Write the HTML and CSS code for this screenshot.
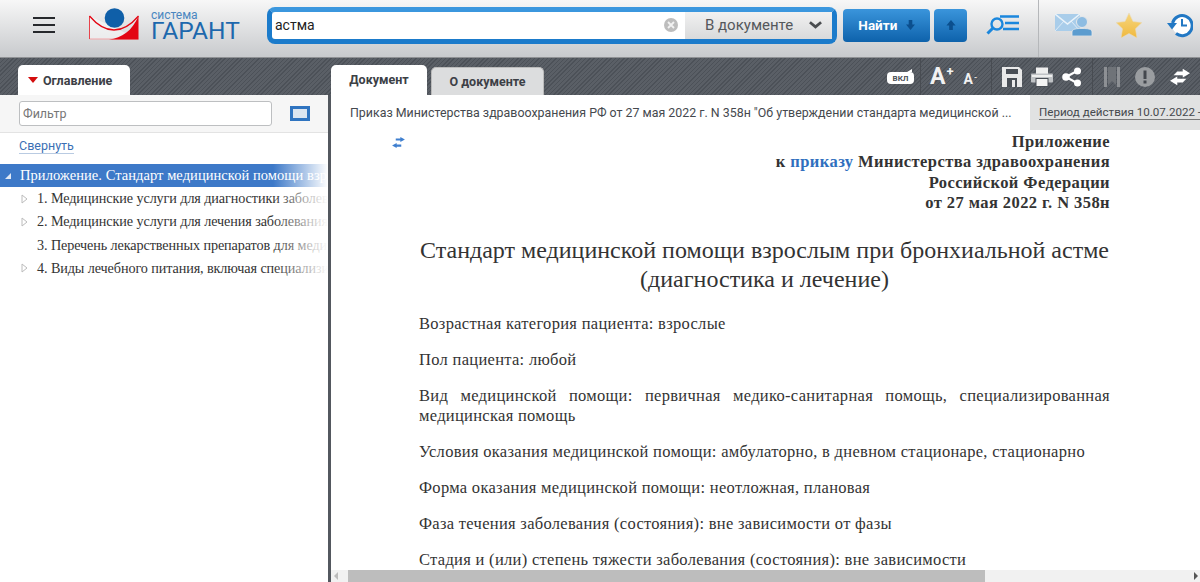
FILE: index.html
```html
<!DOCTYPE html>
<html lang="ru">
<head>
  <meta charset="UTF-8">
  <title>Система ГАРАНТ</title>
  <link rel="stylesheet" href="styles.css">
</head>
<body>

  <div class="topbar">
    <div class="burger"><span></span><span></span><span></span></div>

    <div class="logo">
      <svg class="logo-mark" viewBox="0 0 50 32" width="50" height="32">
        <path d="M0.5 8 V31 H49.5" fill="#fff" fill-opacity="0.5" stroke="#f3a5a8" stroke-width="1"/>
        <path d="M0.5 8 V31" stroke="#e8434b" stroke-width="1"/>
        <path d="M0.5 8 C9 18 17 22 25 22 C33 22 41 18 49.5 8" fill="none" stroke="#e30613" stroke-width="1.3"/>
        <path d="M49.5 8 V31.5 H20 C33 30 43 23 49.5 8 Z" fill="#e30613"/>
        <circle cx="25.5" cy="10" r="9.8" fill="#0f5fa8"/>
      </svg>
      <div class="logo-text">
        <div class="logo-small">система</div>
        <div class="logo-big">ГАРАНТ</div>
      </div>
    </div>

    <div class="search">
      <div class="search-input">астма</div>
      <svg class="search-clear" viewBox="0 0 14 14" width="14" height="14">
        <circle cx="7" cy="7" r="7" fill="#bdbdbd"/>
        <path d="M4 4 L10 10 M10 4 L4 10" stroke="#f2f2f2" stroke-width="1.8"/>
      </svg>
      <div class="search-scope">
        <span>В документе</span>
        <svg viewBox="0 0 14 8" width="13" height="8"><path d="M1 1 L7 6 L13 1" fill="none" stroke="#4a4d50" stroke-width="3"/></svg>
      </div>
    </div>

    <button class="btn-find">Найти
      <svg viewBox="0 0 10 11" width="9" height="10"><path d="M3 0 H7 V5 H10 L5 11 L0 5 H3 Z" fill="#0b4f8e"/></svg>
    </button>
    <button class="btn-up">
      <svg viewBox="0 0 10 12" width="10" height="11"><path d="M3 12 H7 V7 H10 L5 1 L0 7 H3 Z" fill="#0b4f8e"/></svg>
    </button>

    <svg class="icon-results" viewBox="0 0 34 20" width="34" height="20">
      <circle cx="11" cy="9" r="5.5" fill="none" stroke="#1b87dd" stroke-width="2.4"/>
      <path d="M7 13 L1.5 18.5" stroke="#1b87dd" stroke-width="3"/>
      <path d="M14 1.5 H33 M19 8 H33 M17 14 H33" stroke="#1b87dd" stroke-width="2.6"/>
    </svg>

    <div class="top-right">
      <svg class="ico-mail" viewBox="0 0 38 22" width="38" height="22">
        <rect x="0" y="0" width="25" height="17" fill="#a9cdea"/>
        <path d="M0 0 L12.5 10 L25 0" fill="none" stroke="#eaf3fa" stroke-width="1.5"/>
        <path d="M0 17 L9 7 M25 17 L16 7" stroke="#eaf3fa" stroke-width="0.8"/>
        <circle cx="27" cy="8" r="5.5" fill="#8dbce2" stroke="#e6e8ea"/>
        <path d="M17 22 V18 C17 15 21 14.5 27 14.5 C33 14.5 37 15 37 18 V22 Z" fill="#5c9ccf" stroke="#e6e8ea" stroke-width="0.8"/>
      </svg>
      <svg class="ico-star" viewBox="0 0 26 25" width="26" height="25">
        <defs>
          <linearGradient id="star" x1="0" y1="0" x2="0" y2="1">
            <stop offset="0" stop-color="#f6d67e"/>
            <stop offset="1" stop-color="#f0b93f"/>
          </linearGradient>
        </defs>
        <path d="M13 0 L17 8.5 L26 9.5 L19.5 15.7 L21 25 L13 20.5 L5 25 L6.5 15.7 L0 9.5 L9 8.5 Z" fill="url(#star)" stroke="#e9dcc0" stroke-width="0.6"/>
      </svg>
      <svg class="ico-history" viewBox="0 0 26 25" width="26" height="25">
        <circle cx="15" cy="12" r="10" fill="#fff"/>
        <path d="M5.5 10 A10 10 0 1 1 9 20.5" fill="none" stroke="#2278c4" stroke-width="3"/>
        <path d="M15 6 V12.5 H20" fill="none" stroke="#2278c4" stroke-width="2"/>
        <path d="M0 10 H10 L5 16.5 Z" fill="#2278c4"/>
      </svg>
    </div>
  </div>

  <div class="darkbar">
    <div class="darkbar-left">
      <div class="tab-toc"><i class="red-arrow"></i>Оглавление</div>
    </div>
    <div class="darkbar-right">
      <div class="tab tab-active">Документ</div>
      <div class="tab tab-other">О документе</div>

      <div class="doc-tools">
        <div class="tool-group group-vkl">
          <div class="vkl">ВКЛ</div>
        </div>
        <div class="tool-group font-size">
          <span class="a-big">A<sup>+</sup></span>
          <span class="a-small">A<sup>-</sup></span>
        </div>
        <div class="tool-group icons">
          <svg viewBox="0 0 20 20" width="20" height="20">
            <path d="M0 0 H17 L20 3 V20 H0 Z" fill="#e9e9e9"/>
            <rect x="4" y="2" width="12" height="5" fill="#4a4f56"/>
            <rect x="5" y="11" width="10" height="9" fill="#4a4f56"/>
            <rect x="10" y="13" width="3" height="7" fill="#e9e9e9"/>
          </svg>
          <svg viewBox="0 0 22 20" width="22" height="20">
            <rect x="5" y="0.5" width="12" height="7" fill="#eee"/>
            <rect x="0" y="6.5" width="22" height="9" rx="1" fill="#bfc2c5"/>
            <rect x="1" y="8" width="20" height="2" fill="#eee"/>
            <rect x="5" y="11.5" width="12" height="8" fill="#f4f4f4" stroke="#4a4f56"/>
          </svg>
          <svg viewBox="0 0 20 20" width="20" height="20">
            <path d="M4 10 L15 4 M4 10 L15 16" stroke="#fff" stroke-width="2"/>
            <circle cx="4" cy="10" r="3.8" fill="#fff"/>
            <circle cx="15.5" cy="4" r="3.5" fill="#fff"/>
            <circle cx="15.5" cy="16" r="3.5" fill="#fff"/>
          </svg>
        </div>
        <div class="tool-group icons last">
          <svg viewBox="0 0 16 20" width="16" height="20">
            <path d="M0 0 H3 V20 H0 Z M13 0 H16 V20 H13 Z" fill="#8d9094"/>
            <path d="M4 0 H12 V18 L8 14 L4 18 Z" fill="#6f7378"/>
          </svg>
          <svg viewBox="0 0 20 20" width="20" height="20">
            <circle cx="10" cy="10" r="10" fill="#9a9da0"/>
            <rect x="8.5" y="3.5" width="3" height="8.5" fill="#44484e"/>
            <rect x="8.5" y="13.5" width="3" height="3" fill="#44484e"/>
          </svg>
          <svg viewBox="0 0 22 18" width="20" height="18">
            <path d="M8 3 H14 V0 L22 5 L14 9.5 V7 H4 Z" fill="#fff"/>
            <path d="M14 15 H8 V18 L0 13 L8 8.5 V11 H18 Z" fill="#fff"/>
          </svg>
        </div>
      </div>
    </div>
  </div>

  <div class="main">
    <div class="sidebar">
      <div class="filter-row">
        <div class="filter-input">Фильтр</div>
        <div class="filter-btn"></div>
      </div>
      <div class="collapse-row"><a class="collapse">Свернуть</a></div>

      <div class="tree">
        <div class="tree-item selected"><i class="tri-open"></i><span>Приложение. Стандарт медицинской помощи взрослым при бронхиальной астме</span></div>
        <div class="tree-item sub">
          <svg class="tri" viewBox="0 0 7 10" width="7" height="10"><path d="M1 1 L6 5 L1 9 Z" fill="#fff" stroke="#bcbcbc"/></svg>
          <span>1. Медицинские услуги для диагностики заболевания, состояния</span>
        </div>
        <div class="tree-item sub">
          <svg class="tri" viewBox="0 0 7 10" width="7" height="10"><path d="M1 1 L6 5 L1 9 Z" fill="#fff" stroke="#bcbcbc"/></svg>
          <span>2. Медицинские услуги для лечения заболевания, состояния</span>
        </div>
        <div class="tree-item sub leaf"><span>3. Перечень лекарственных препаратов для медицинского применения</span></div>
        <div class="tree-item sub">
          <svg class="tri" viewBox="0 0 7 10" width="7" height="10"><path d="M1 1 L6 5 L1 9 Z" fill="#fff" stroke="#bcbcbc"/></svg>
          <span>4. Виды лечебного питания, включая специализированные продукты</span>
        </div>
      </div>
    </div>

    <div class="content">
      <div class="doc-head">
        <div class="doc-title">Приказ Министерства здравоохранения РФ от 27 мая 2022 г. N 358н "Об утверждении стандарта медицинской ...</div>
        <div class="doc-period"><span>Период действия 10.07.2022 - не установлен</span></div>
      </div>

      <div class="doc-body">
        <svg class="swap" viewBox="0 0 14 12" width="13" height="11">
          <path d="M4 1.5 H9 V0 L14 2.7 L9 5.4 V3.9 H4 Z" fill="#3f7fcf"/>
          <path d="M10 8.1 H5 V6.6 L0 9.3 L5 12 V10.5 H10 Z" fill="#3f7fcf"/>
        </svg>

        <div class="doc-text">
          <div class="appendix">
            <div>Приложение</div>
            <div>к <a>приказу</a> Министерства здравоохранения</div>
            <div>Российской Федерации</div>
            <div>от 27 мая 2022 г. N 358н</div>
          </div>

          <h1>Стандарт медицинской помощи взрослым при бронхиальной астме<br>(диагностика и лечение)</h1>

          <p>Возрастная категория пациента: взрослые</p>
          <p>Пол пациента: любой</p>
          <p class="justify">Вид медицинской помощи: первичная медико-санитарная помощь, специализированная медицинская помощь</p>
          <p>Условия оказания медицинской помощи: амбулаторно, в дневном стационаре, стационарно</p>
          <p>Форма оказания медицинской помощи: неотложная, плановая</p>
          <p>Фаза течения заболевания (состояния): вне зависимости от фазы</p>
          <p>Стадия и (или) степень тяжести заболевания (состояния): вне зависимости</p>
        </div>
      </div>

      <div class="hscroll">
        <i class="arr-left"></i>
        <div class="hscroll-thumb"></div>
        <i class="arr-right"></i>
      </div>
    </div>
  </div>

</body>
</html>
```

FILE: styles.css
```css
html, body {
  margin: 0;
  height: 582px;
  overflow: hidden;
}

body {
  font-family: Roboto, "Liberation Sans", sans-serif;
  background: #fff;
  color: #333;
}

.topbar {
  display: flex;
  align-items: center;
  height: 58px;
  box-sizing: border-box;
  padding-bottom: 7px;
  background: linear-gradient(#f7f7f7, #c8cacd);
  border-bottom: 1px solid #8f9194;
}

.burger {
  width: 22px;
  margin-left: 33px;
  display: flex;
  flex-direction: column;
  gap: 5px;
}

.burger span {
  display: block;
  height: 2px;
  background: #26282c;
}

.logo {
  display: flex;
  align-self: flex-start;
  margin-left: 34px;
  width: 178px;
}

.logo-mark {
  margin-top: 8px;
  flex-shrink: 0;
}

.logo-text {
  margin: 9px 0 0 12px;
}

.logo-small {
  font-size: 12px;
  line-height: 12px;
  color: #4a86c0;
}

.logo-big {
  font-size: 24.5px;
  line-height: 20px;
  color: #1d68ad;
}

.search {
  display: flex;
  align-items: center;
  width: 570px;
  height: 37px;
  box-sizing: border-box;
  background: #fff;
  border: 5px solid #1b7bcb;
  border-top-color: #3b97de;
  border-radius: 8px;
}

.search-input {
  flex: 1;
  font-size: 14px;
  padding-left: 3px;
  color: #222;
}

.search-clear {
  margin-right: 7px;
}

.search-scope {
  display: flex;
  align-items: center;
  justify-content: space-between;
  width: 147px;
  height: 100%;
  box-sizing: border-box;
  padding: 0 10px 0 20px;
  background: linear-gradient(#f1f1f1, #d9dadb);
  font-size: 15px;
  color: #55585c;
}

.btn-find, .btn-up {
  border: none;
  height: 33px;
  border-radius: 4px;
  background: linear-gradient(#3a95dc, #0e62ab);
  color: #fff;
  font-family: inherit;
  font-weight: bold;
  font-size: 13.5px;
  cursor: pointer;
}

.btn-find {
  width: 87px;
  margin-left: 6px;
  padding: 0;
}

.btn-find svg {
  margin-left: 5px;
}

.btn-up {
  width: 33px;
  margin-left: 4px;
  padding: 0;
}

.icon-results {
  margin-left: 19px;
}

.top-right {
  display: flex;
  align-items: center;
  align-self: stretch;
  margin-left: 18px;
  margin-bottom: -7px;
  padding: 0 0 7px 16px;
  border-left: 1px solid #b5b7ba;
}

.ico-star {
  margin-left: 23px;
}

.ico-history {
  margin-left: 25px;
}

.darkbar {
  display: flex;
  height: 37px;
  background-color: #53585f;
  background-image: repeating-linear-gradient(135deg, #4c5158 0, #4c5158 1px, #5a5f66 1px, #5a5f66 3px);
  box-sizing: border-box;
}

.darkbar-left {
  width: 331px;
  display: flex;
  align-items: flex-end;
  padding-left: 18px;
  box-sizing: border-box;
}

.tab-toc {
  display: flex;
  align-items: center;
  width: 112px;
  height: 30px;
  box-sizing: border-box;
  padding-left: 10px;
  background: #fff;
  border-radius: 5px 5px 0 0;
  font-size: 12.5px;
  font-weight: bold;
  color: #3c4046;
}

.red-arrow {
  width: 0;
  height: 0;
  margin-right: 5px;
  border-left: 5px solid transparent;
  border-right: 5px solid transparent;
  border-top: 6px solid #d40d0d;
}

.darkbar-right {
  flex: 1;
  display: flex;
  align-items: flex-end;
}

.tab {
  box-sizing: border-box;
  border-radius: 5px 5px 0 0;
  font-size: 12.5px;
  font-weight: bold;
  color: #3c4046;
  text-align: center;
}

.tab-active {
  width: 96px;
  height: 30px;
  line-height: 30px;
  background: #fff;
}

.tab-other {
  width: 113px;
  height: 28px;
  line-height: 27px;
  margin-left: 4px;
  background: #dcddde;
  border: 1px solid #bbb;
  border-bottom: none;
}

.doc-tools {
  flex: 1;
  display: flex;
  justify-content: flex-end;
  height: 100%;
}

.tool-group {
  display: flex;
  align-items: center;
  height: 100%;
  border-left: 1px solid #484c52;
}

.group-vkl {
  border-left: none;
  padding-right: 6px;
}

.vkl {
  position: relative;
  width: 27px;
  height: 12px;
  margin-top: 3px;
  background: #fff;
  border-radius: 4px;
  color: #4a4f56;
  font-size: 8px;
  font-weight: bold;
  line-height: 13px;
  text-align: center;
}

.vkl::after {
  content: "";
  position: absolute;
  right: 2px;
  top: -3px;
  border-right: 5px solid #fff;
  border-top: 3px solid transparent;
}

.font-size {
  width: 71px;
  box-sizing: border-box;
  align-items: baseline;
  color: #f2f2f2;
  font-weight: bold;
  padding-left: 9px;
  line-height: 37px;
}

.font-size sup {
  font-size: 13px;
  vertical-align: 8px;
  line-height: 0;
  margin-left: 1px;
}

.a-big {
  font-size: 23px;
}

.a-small {
  font-size: 14px;
  margin-left: 10px;
}

.a-small sup {
  font-size: 8px;
  vertical-align: 4px;
}

.icons {
  gap: 9px;
  padding: 0 10px 0 10px;
}

.icons.last {
  gap: 15px;
  padding: 0 10px 0 11px;
}

.main {
  display: flex;
  height: 487px;
}

.sidebar {
  width: 328px;
  flex-shrink: 0;
  overflow: hidden;
}

.filter-row {
  display: flex;
  align-items: center;
  height: 37px;
  padding-left: 19px;
  background: #f6f6f6;
  border-bottom: 1px solid #e3e3e3;
}

.filter-input {
  width: 253px;
  height: 25px;
  box-sizing: border-box;
  background: #fff;
  border: 1px solid #bdbfc1;
  border-radius: 3px;
  padding-left: 3px;
  font-size: 12.5px;
  line-height: 23px;
  color: #777;
}

.filter-btn {
  width: 20px;
  height: 15px;
  box-sizing: border-box;
  margin-left: 18px;
  background: #dbe5f0;
  border: 3px solid #2f74c0;
}

.collapse-row {
  height: 31px;
  padding: 2px 0 0 19px;
  box-sizing: border-box;
}

.collapse {
  font-size: 12.5px;
  color: #3a6fb5;
  border-bottom: 1px solid #b9cbe2;
}

.tree {
  font-family: "Liberation Serif", serif;
  font-size: 14.2px;
}

.tree-item {
  display: flex;
  align-items: center;
  height: 23.2px;
  white-space: nowrap;
  overflow: hidden;
  position: relative;
  color: #333;
  letter-spacing: -0.1px;
}

.tree-item::after {
  content: "";
  position: absolute;
  top: 0;
  bottom: 0;
  right: 0;
  width: 55px;
  background: linear-gradient(to right, rgba(255, 255, 255, 0), #fff);
}

.tree-item.selected {
  background: #3d79c8;
  color: #fff;
  padding-left: 5px;
  font-size: 14.5px;
  letter-spacing: 0.05px;
}

.tree-item.sub {
  padding-left: 21px;
}

.tree-item.leaf {
  padding-left: 37px;
}

.tri-open {
  width: 0;
  height: 0;
  margin-right: 9px;
  border-left: 6px solid transparent;
  border-bottom: 6px solid #dfe8f5;
}

.tri {
  margin-right: 9px;
  flex-shrink: 0;
}

.content {
  flex: 1;
  display: flex;
  flex-direction: column;
  min-width: 0;
  border-left: 3px solid #53585f;
}

.doc-head {
  display: flex;
  height: 35px;
  flex-shrink: 0;
}

.doc-title {
  width: 699px;
  flex-shrink: 0;
  box-sizing: border-box;
  padding: 10px 0 0 19px;
  font-size: 12.4px;
  color: #45494e;
  white-space: nowrap;
  overflow: hidden;
}

.doc-period {
  flex: 1;
  background: #e1e2e2;
  padding: 10px 0 0 9px;
  font-size: 11.6px;
  color: #45494e;
  white-space: nowrap;
  overflow: hidden;
}

.doc-period span {
  border-bottom: 1px solid #777;
}

.doc-body {
  flex: 1;
  display: flex;
  min-height: 0;
  overflow: hidden;
  position: relative;
}

.swap {
  position: absolute;
  left: 61px;
  top: 7px;
}

.doc-text {
  width: 691px;
  margin-left: 88px;
  font-family: "Liberation Serif", serif;
  font-size: 16.5px;
  letter-spacing: 0.3px;
  color: #333;
}

.appendix {
  text-align: right;
  font-weight: bold;
  letter-spacing: 0.42px;
  line-height: 20.4px;
  margin-top: 2px;
}

.appendix a {
  color: #2f6fbe;
}

h1 {
  margin: 22px 0 20px;
  font-size: 24px;
  font-weight: normal;
  letter-spacing: 0;
  line-height: 29px;
  text-align: center;
}

p {
  margin: 0 0 16px;
  line-height: 20px;
}

.justify {
  text-align: justify;
}

.hscroll {
  display: flex;
  align-items: center;
  height: 12px;
  flex-shrink: 0;
  background: #f1f1f1;
}

.hscroll-thumb {
  width: 637px;
  height: 100%;
  margin-left: 10px;
  background: #bdbdbd;
}

.arr-left, .arr-right {
  width: 0;
  height: 0;
  border-top: 4px solid transparent;
  border-bottom: 4px solid transparent;
}

.arr-left {
  margin-left: 3px;
  border-right: 4px solid #bbb;
}

.arr-right {
  margin-left: auto;
  margin-right: 2px;
  border-left: 4px solid #555;
}
```
